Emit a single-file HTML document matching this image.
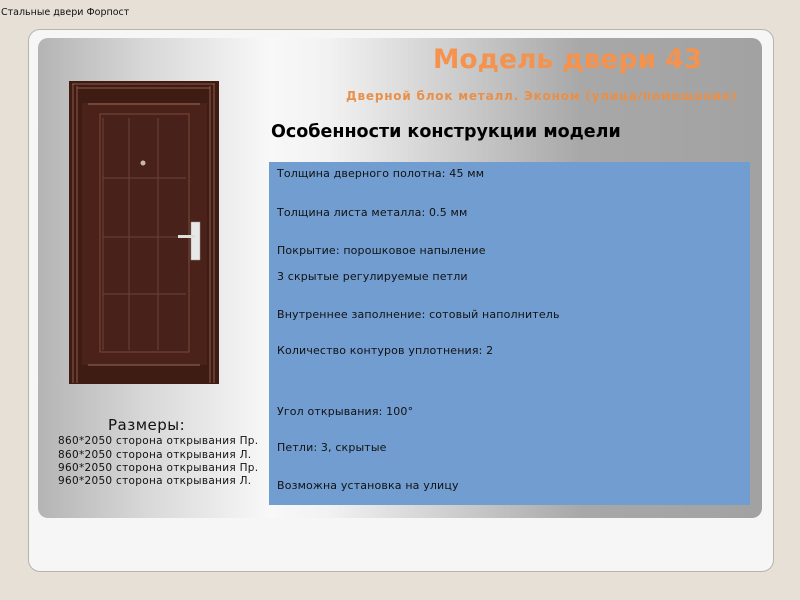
<!DOCTYPE html>
<html><head><meta charset="utf-8"><style>
*{margin:0;padding:0;box-sizing:border-box}
body{width:800px;height:600px;background:#e6e0d6;position:relative;overflow:hidden;font-family:"DejaVu Sans","Liberation Sans",sans-serif}
.t{position:absolute;white-space:nowrap}
#outer{position:absolute;left:28px;top:29px;width:746px;height:543px;background:#f6f6f6;border:1px solid #b8b4aa;border-radius:12px}
#grey{position:absolute;left:38px;top:38px;width:724px;height:480px;border-radius:10px;
background:linear-gradient(90deg,#b4b4b4 0%,#d8d8d8 15%,#f8f8f8 32%,#f2f2f2 40%,#c8c8c8 60%,#a8a8a8 75%,#a2a2a2 100%)}
#blue{position:absolute;left:269px;top:162px;width:481px;height:343px;background:#729dd0}
.b{font-size:11px;color:#111;left:277px;letter-spacing:0.15px}
.s{font-size:10.5px;color:#111;letter-spacing:0.3px}
</style></head><body>
<div class="t" style="left:1px;top:7px;font-size:9.5px;color:#111">Стальные двери Форпост</div>
<div id="outer"></div>
<div id="grey"></div>
<div class="t" style="left:433px;top:44px;font-size:26.5px;font-weight:bold;color:#f4924e">Модель двери 43</div>
<div class="t" style="left:346px;top:89px;font-size:12px;font-weight:bold;color:#e8904a;letter-spacing:0.8px">Дверной блок металл. Эконом (улица/помещение)</div>
<div class="t" style="left:271px;top:122px;font-size:17.5px;font-weight:bold;color:#000">Особенности конструкции модели</div>
<div id="blue"></div>
<div class="t b" style="top:167px">Толщина дверного полотна: 45 мм</div>
<div class="t b" style="top:206px">Толщина листа металла: 0.5 мм</div>
<div class="t b" style="top:244px">Покрытие: порошковое напыление</div>
<div class="t b" style="top:270px">3 скрытые регулируемые петли</div>
<div class="t b" style="top:308px">Внутреннее заполнение: сотовый наполнитель</div>
<div class="t b" style="top:344px">Количество контуров уплотнения: 2</div>
<div class="t b" style="top:405px">Угол открывания: 100°</div>
<div class="t b" style="top:441px">Петли: 3, скрытые</div>
<div class="t b" style="top:479px">Возможна установка на улицу</div>
<svg style="position:absolute;left:69px;top:81px" width="150" height="303" viewBox="69 81 150 303">
<rect x="69" y="81" width="150" height="303" fill="#3e1c14"/>
<g fill="none" stroke="#8a5a48" stroke-width="1">
<line x1="73" y1="84" x2="73" y2="383"/><line x1="77" y1="86" x2="77" y2="383"/>
<line x1="210" y1="86" x2="210" y2="383"/><line x1="214" y1="84" x2="214" y2="383"/>
<line x1="72" y1="84" x2="215" y2="84"/><line x1="77" y1="88" x2="210" y2="88"/>
</g>
<rect x="82" y="103" width="125" height="262" fill="#4a2219"/>
<line x1="88" y1="104" x2="200" y2="104" stroke="#9a6a58"/>
<line x1="88" y1="365" x2="200" y2="365" stroke="#9a6a58"/>
<rect x="100" y="114" width="89" height="238" fill="#48221a" stroke="#7a4a3a"/>
<g stroke="#6e4234"><line x1="103" y1="118" x2="103" y2="350"/>
<line x1="129" y1="118" x2="129" y2="350"/><line x1="158" y1="118" x2="158" y2="350"/>
<line x1="103" y1="178" x2="186" y2="178"/><line x1="103" y1="237" x2="186" y2="237"/><line x1="103" y1="294" x2="186" y2="294"/></g>
<circle cx="143" cy="163" r="2.5" fill="#c8b8a8"/>
<rect x="191" y="222" width="9" height="38" fill="#e8e8e8" stroke="#999" stroke-width="0.5"/>
<rect x="178" y="235" width="17" height="3" fill="#ddd"/>
</svg>
<div class="t" style="left:108px;top:416px;font-size:15px;color:#111;letter-spacing:0.5px">Размеры:</div>
<div class="t s" style="left:58px;top:435px">860*2050 сторона открывания Пр.</div>
<div class="t s" style="left:58px;top:449px">860*2050 сторона открывания Л.</div>
<div class="t s" style="left:58px;top:462px">960*2050 сторона открывания Пр.</div>
<div class="t s" style="left:58px;top:475px">960*2050 сторона открывания Л.</div>
</body></html>
